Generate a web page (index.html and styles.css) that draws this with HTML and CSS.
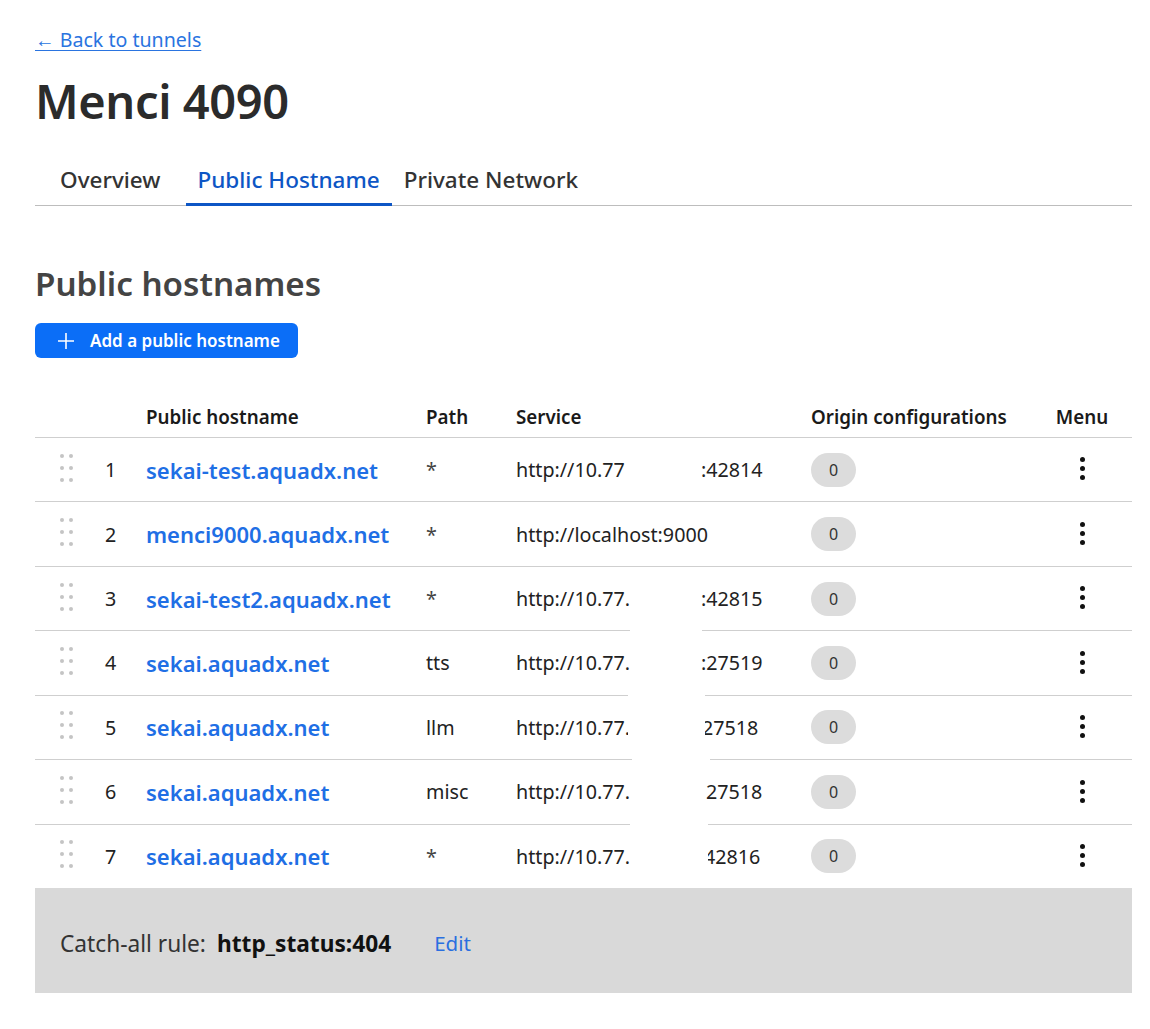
FILE: index.html
```html
<!DOCTYPE html>
<html lang="en">
<head>
<meta charset="utf-8">
<title>Menci 4090 - Public Hostname</title>
<link rel="stylesheet" href="styles.css">
</head>
<body>
<div class="page">
  <a class="back" href="#">← Back to tunnels</a>
  <h1 class="title">Menci 4090</h1>
  <nav class="tabs">
    <a class="tab tab-first" href="#">Overview</a>
    <a class="tab active" href="#">Public Hostname</a>
    <a class="tab" href="#">Private Network</a>
  </nav>

  <h2 class="section-title">Public hostnames</h2>
  <button class="add-btn">
    <svg class="plus" width="18" height="18" viewBox="0 0 18 18"><path d="M9 1v16M1 9h16" stroke="#fff" stroke-width="1.6" fill="none"/></svg>
    <span>Add a public hostname</span>
  </button>

  <div class="table">
    <div class="row head">
      <div></div><div></div>
      <div>Public hostname</div>
      <div>Path</div>
      <div>Service</div>
      <div>Origin configurations</div>
      <div class="c-menu">Menu</div>
      <div></div>
    </div>

    <div class="row">
      <div class="handle"><i></i><i></i><i></i><i></i><i></i><i></i></div>
      <div class="num">1</div>
      <div><a class="host" href="#">sekai-test.aquadx.net</a></div>
      <div class="path">*</div>
      <div class="svc"><span class="svc-a">http://10.77</span><span class="svc-b">:42814</span></div>
      <div><span class="badge">0</span></div>
      <div class="c-menu"><span class="kebab"><i></i><i></i><i></i></span></div>
      <div></div>
    </div>

    <div class="row">
      <div class="handle"><i></i><i></i><i></i><i></i><i></i><i></i></div>
      <div class="num">2</div>
      <div><a class="host" href="#">menci9000.aquadx.net</a></div>
      <div class="path">*</div>
      <div class="svc"><span>http://localhost:9000</span></div>
      <div><span class="badge">0</span></div>
      <div class="c-menu"><span class="kebab"><i></i><i></i><i></i></span></div>
      <div></div>
    </div>

    <div class="row">
      <div class="handle"><i></i><i></i><i></i><i></i><i></i><i></i></div>
      <div class="num">3</div>
      <div><a class="host" href="#">sekai-test2.aquadx.net</a></div>
      <div class="path">*</div>
      <div class="svc"><span class="svc-a">http://10.77.</span><span class="svc-b">:42815</span></div>
      <div><span class="badge">0</span></div>
      <div class="c-menu"><span class="kebab"><i></i><i></i><i></i></span></div>
      <div></div>
    </div>

    <div class="row">
      <div class="handle"><i></i><i></i><i></i><i></i><i></i><i></i></div>
      <div class="num">4</div>
      <div><a class="host" href="#">sekai.aquadx.net</a></div>
      <div>tts</div>
      <div class="svc"><span class="svc-a">http://10.77.</span><span class="svc-b">:27519</span><span class="mask m4"></span></div>
      <div><span class="badge">0</span></div>
      <div class="c-menu"><span class="kebab"><i></i><i></i><i></i></span></div>
      <div></div>
    </div>

    <div class="row">
      <div class="handle"><i></i><i></i><i></i><i></i><i></i><i></i></div>
      <div class="num">5</div>
      <div><a class="host" href="#">sekai.aquadx.net</a></div>
      <div>llm</div>
      <div class="svc"><span class="svc-a">http://10.77.</span><span class="svc-b b5">27518</span><span class="mask m5"></span></div>
      <div><span class="badge">0</span></div>
      <div class="c-menu"><span class="kebab"><i></i><i></i><i></i></span></div>
      <div></div>
    </div>

    <div class="row">
      <div class="handle"><i></i><i></i><i></i><i></i><i></i><i></i></div>
      <div class="num">6</div>
      <div><a class="host" href="#">sekai.aquadx.net</a></div>
      <div>misc</div>
      <div class="svc"><span class="svc-a">http://10.77.</span><span class="svc-b b6">27518</span><span class="mask m6"></span></div>
      <div><span class="badge">0</span></div>
      <div class="c-menu"><span class="kebab"><i></i><i></i><i></i></span></div>
      <div></div>
    </div>

    <div class="row">
      <div class="handle"><i></i><i></i><i></i><i></i><i></i><i></i></div>
      <div class="num">7</div>
      <div><a class="host" href="#">sekai.aquadx.net</a></div>
      <div class="path">*</div>
      <div class="svc"><span class="svc-a">http://10.77.</span><span class="svc-b b7">42816</span><span class="mask m7"></span></div>
      <div><span class="badge">0</span></div>
      <div class="c-menu"><span class="kebab"><i></i><i></i><i></i></span></div>
      <div></div>
    </div>

    <div class="catch-all">
      <span class="ca-label">Catch-all rule:</span>
      <strong class="ca-value">http_status:404</strong>
      <a class="ca-edit" href="#">Edit</a>
    </div>
  </div>
</div>
</body>
</html>
```

FILE: styles.css
```css
* { box-sizing: border-box; }
html, body { margin: 0; padding: 0; background: #fff; }
body {
  font-family: "Noto Sans", "Open Sans", "Liberation Sans", sans-serif;
  color: #222;
}
.page {
  padding: 27px 18px 0 35px;
}
.back {
  display: inline-block;
  font-size: 19.6px;
  line-height: 26px;
  color: #2a74e0;
  text-decoration: underline;
  text-underline-offset: 3px;
  text-decoration-thickness: 1px;
}
.title {
  margin: 20px 0 0;
  font-size: 47px;
  line-height: 56px;
  font-weight: 600;
  color: #2b2b2b;
  letter-spacing: -0.4px;
}
.tabs {
  display: flex;
  margin-top: 37px;
  border-bottom: 1px solid #bdbdbd;
}
.tab {
  display: block;
  padding: 0 12px 9px;
  font-size: 22.5px;
  line-height: 28px;
  font-weight: 500;
  color: #333;
  text-decoration: none;
  border-bottom: 3px solid transparent;
  margin-bottom: -1px;
}
.tab-first { margin: 0 13px -1px 13px; }
.tab.active {
  color: #0d56c5;
  border-bottom-color: #0d56c5;
}
.section-title {
  margin: 57px 0 0;
  font-size: 33.2px;
  line-height: 42px;
  font-weight: 600;
  color: #444;
}
.add-btn {
  margin-top: 18px;
  display: flex;
  align-items: center;
  gap: 15px;
  height: 35px;
  padding: 0 18px 0 22px;
  border: 0;
  border-radius: 6px;
  background: #0b6ef7;
  color: #fff;
  font-family: inherit;
  font-size: 17px;
  font-weight: 600;
}
.plus { flex: none; }

.table { margin-top: 39px; }
.row {
  display: grid;
  grid-template-columns: 60px 51px 280px 90px 295px 233px 76px 1fr;
  align-items: center;
  height: 64.43px;
  border-top: 1px solid #cfcfcf;
  font-size: 19.7px;
  color: #222;
}
.row.head {
  height: 40px;
  border-top: 0;
  font-size: 18.8px;
  font-weight: 600;
  color: #1a1a1a;
}
.c-menu { text-align: center; }
.path { color: #444; }
.handle {
  display: grid;
  grid-template-columns: 4px 4px;
  column-gap: 5px;
  row-gap: 8px;
  padding-left: 25px;
  margin-top: -4px;
}
.handle i {
  display: block;
  width: 4px;
  height: 4px;
  border-radius: 50%;
  background: #c4c4c4;
}
.num { padding-left: 10px; }
.host {
  font-size: 22px;
  font-weight: 600;
  color: #1f6fe5;
  text-decoration: none;
}
.svc { position: relative; display: flex; align-self: stretch; align-items: center; }
.svc-a { width: 185px; flex: none; }
.svc-b.b5 { margin-left: 1px; }
.svc-b.b6 { margin-left: 5px; }
.svc-b.b7 { margin-left: 3px; }
.mask {
  position: absolute;
  top: -1px;
  height: 12px;
  background: #fff;
}
.m4 { left: 114px; width: 72px; }
.m5 { left: 112px; width: 77px; height: 64px; }
.m6 { left: 116px; width: 78px; }
.m7 { left: 114px; width: 78px; height: 64px; }
.badge {
  display: inline-flex;
  align-items: center;
  justify-content: center;
  width: 45px;
  height: 34px;
  border-radius: 17px;
  background: #dcdcdc;
  font-size: 16px;
  color: #333;
}
.kebab {
  display: inline-flex;
  flex-direction: column;
  gap: 4px;
  vertical-align: middle;
  margin-top: -6px;
}
.kebab i {
  display: block;
  width: 5px;
  height: 5px;
  border-radius: 50%;
  background: #111;
}
.catch-all {
  display: flex;
  align-items: center;
  height: 105px;
  padding: 6px 0 0 25px;
  background: #d9d9d9;
  font-size: 22.7px;
}
.ca-label { color: #333; }
.ca-value { margin-left: 11px; color: #111; font-weight: 700; }
.ca-edit { margin-left: 43px; color: #2a6fe0; text-decoration: none; font-size: 20.5px; }
```
